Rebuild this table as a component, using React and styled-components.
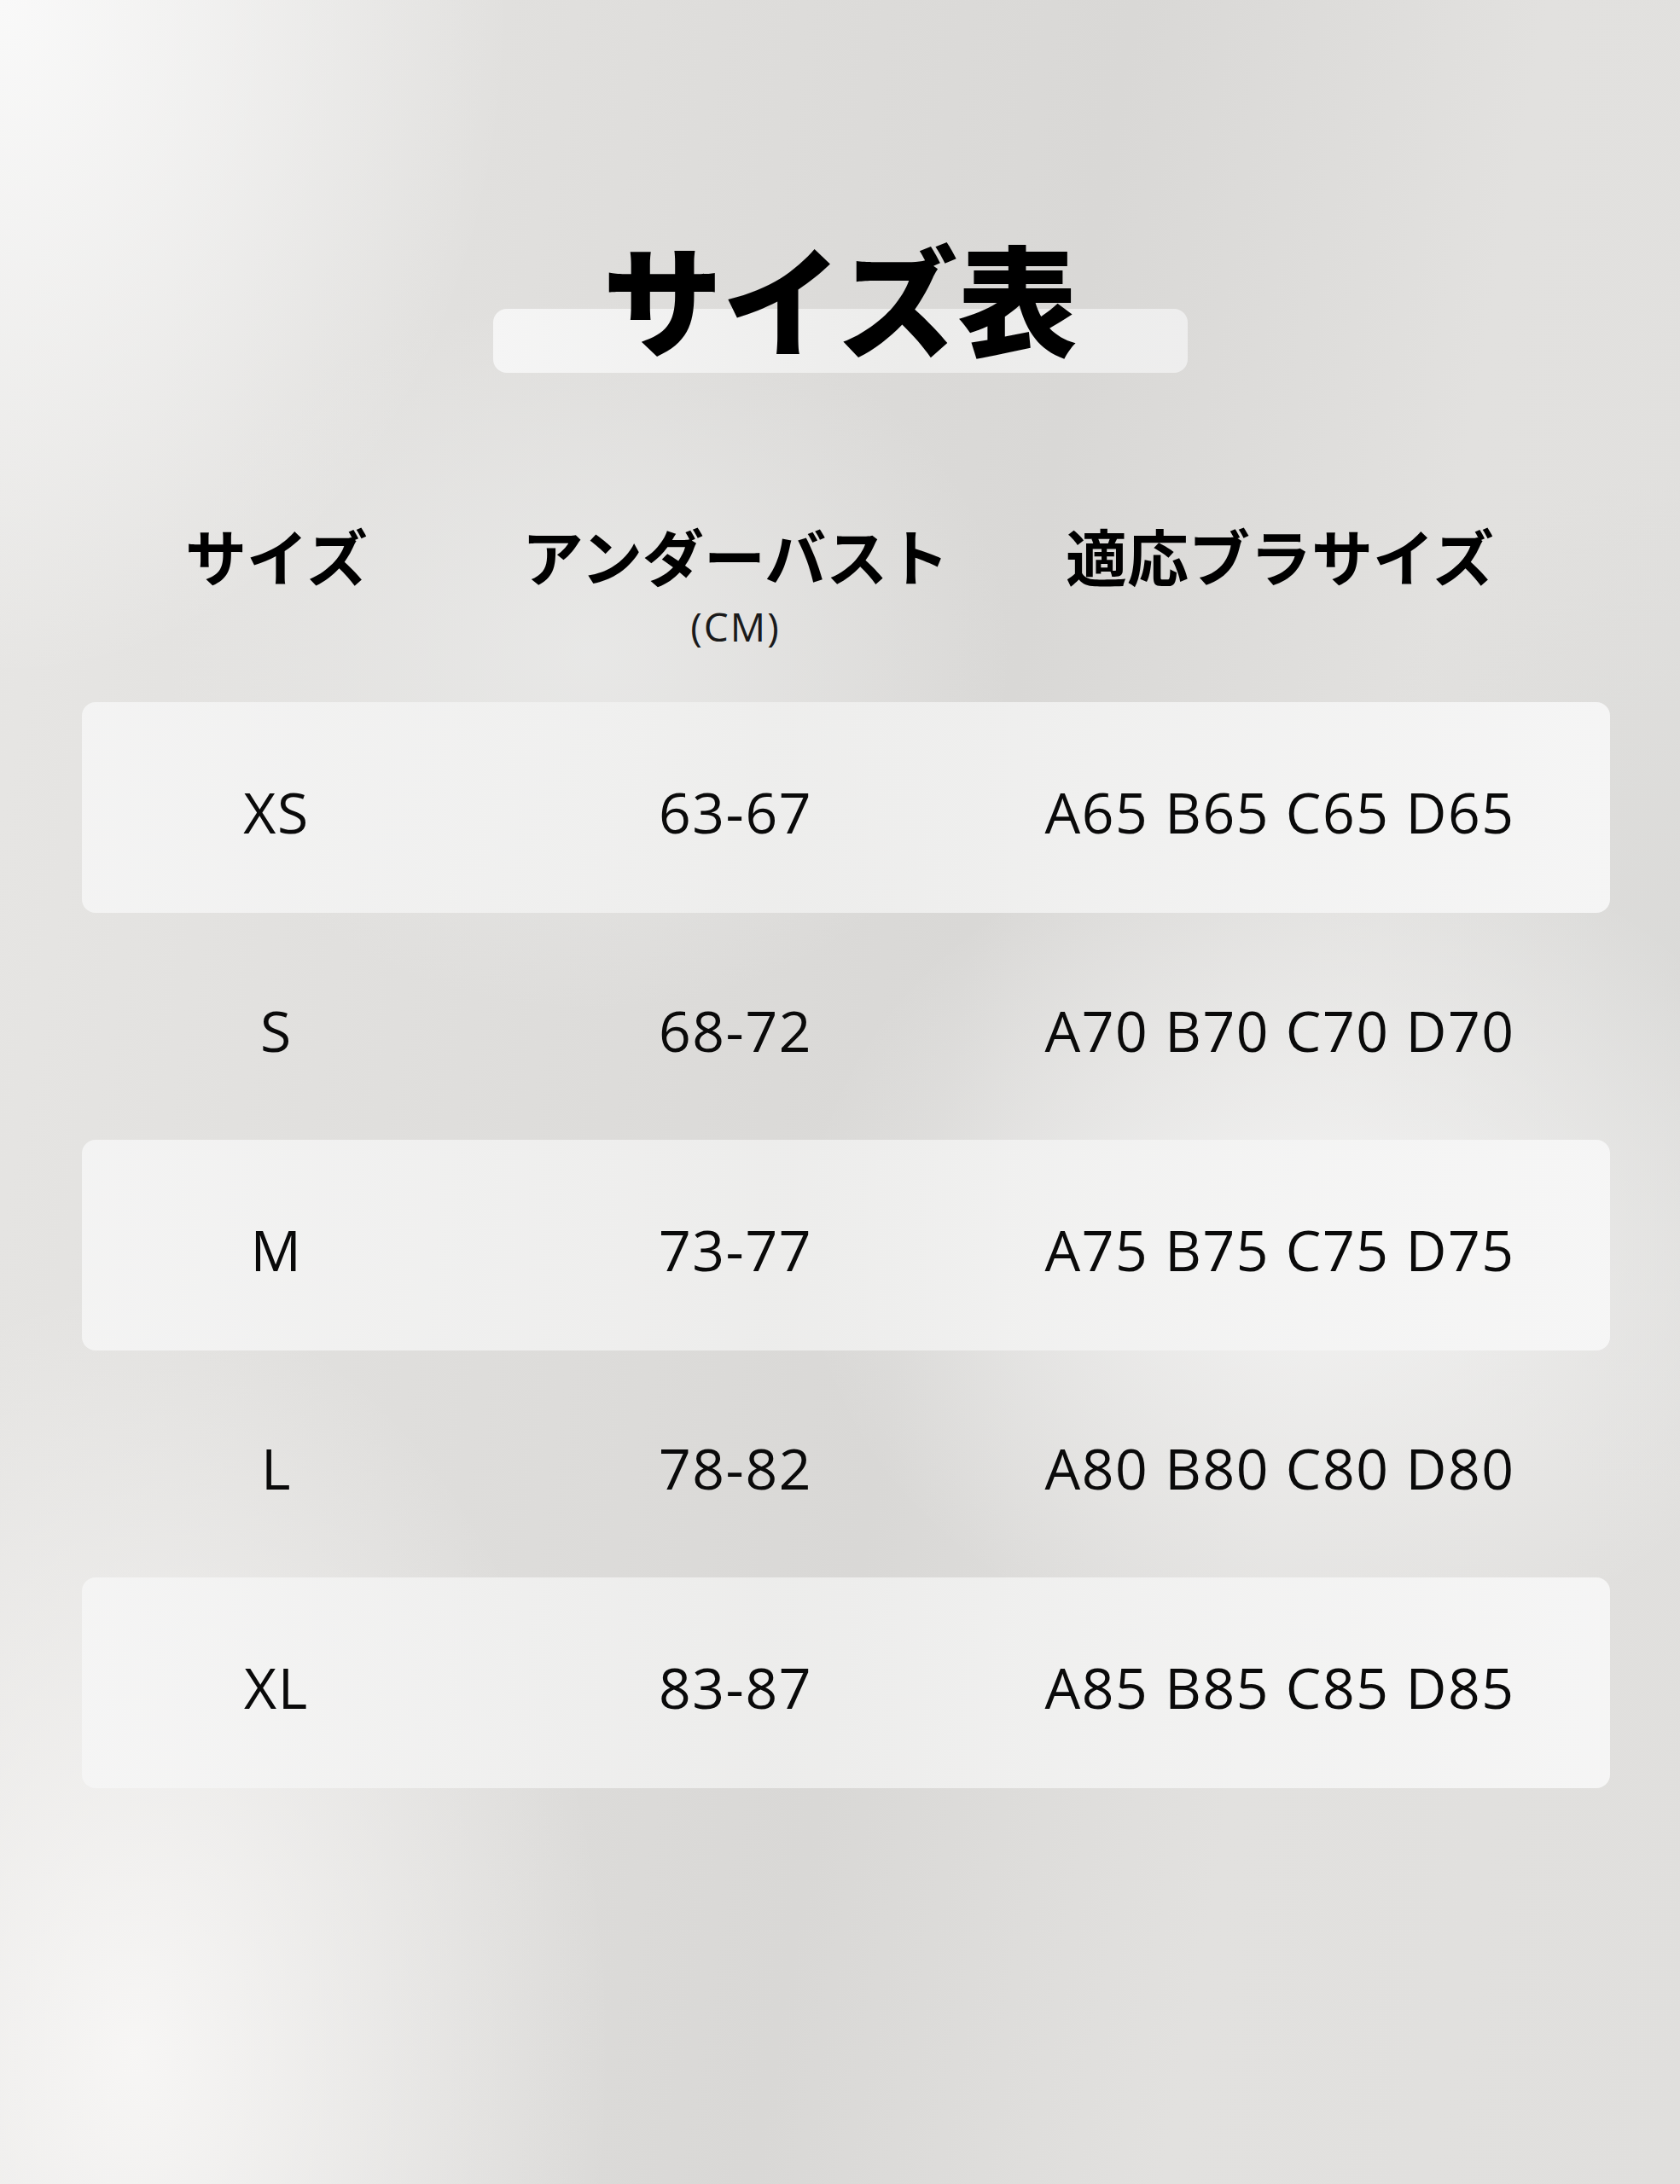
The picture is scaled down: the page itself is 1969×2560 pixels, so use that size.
import React from "react";
import styled, { createGlobalStyle } from "styled-components";

const GlobalStyle = createGlobalStyle`
  html, body {
    margin: 0;
    padding: 0;
  }
  body {
    width: 1969px;
    height: 2560px;
    overflow: hidden;
  }
`;

const Page = styled.div`
  width: 1969px;
  height: 2560px;
  box-sizing: border-box;
  padding-top: 276px;
  color: #0a0a0a;
  background:
    radial-gradient(ellipse 600px 800px at 0% 0%, rgba(250, 250, 250, 0.95), rgba(250, 250, 250, 0) 100%),
    radial-gradient(ellipse 560px 900px at 8% 94%, rgba(248, 247, 246, 0.95), rgba(248, 247, 246, 0) 100%),
    radial-gradient(ellipse 600px 500px at 78% 57%, rgba(248, 248, 248, 0.75), rgba(248, 248, 248, 0) 100%),
    radial-gradient(ellipse 500px 420px at 35% 30%, rgba(236, 236, 235, 0.7), rgba(236, 236, 235, 0) 100%),
    radial-gradient(ellipse 420px 600px at 100% 45%, rgba(214, 214, 212, 0.6), rgba(214, 214, 212, 0) 100%),
    linear-gradient(100deg, #e8e7e5 0%, #dedddb 35%, #d9d8d6 55%, #e2e1df 75%, #e0dfdd 100%);
`;

const TitleWrap = styled.div`
  display: grid;
  width: 814px;
  height: 161px;
  margin: 0 auto;
  & > * {
    grid-area: 1 / 1;
  }
`;

const TitleBar = styled.div`
  align-self: end;
  height: 75px;
  border-radius: 16px;
  background: linear-gradient(90deg, rgba(246, 246, 246, 0.95), rgba(238, 238, 237, 0.9) 60%, rgba(240, 240, 240, 0.9));
`;

const Title = styled.h1`
  align-self: start;
  margin: 0;
  text-align: center;
  font-family: "Noto Sans CJK JP", "Noto Sans", sans-serif;
  font-weight: 900;
  font-size: 140px;
  line-height: 1;
  color: #000;
  position: relative;
`;

const Table = styled.div`
  width: 1791px;
  margin-left: 96px;
  display: flex;
  flex-direction: column;
`;

const Grid = styled.div`
  display: grid;
  grid-template-columns: 456px 620px 656px;
  align-items: center;
  justify-items: center;
`;

const HeadRow = styled(Grid)`
  margin-top: 177px;
  align-items: start;
`;

const HeadCell = styled.div`
  display: flex;
  flex-direction: column;
  align-items: center;
`;

const HeadLabel = styled.div`
  font-family: "Noto Sans CJK JP", "Noto Sans", sans-serif;
  font-weight: 700;
  font-size: 72px;
  line-height: 1;
  color: #000;
  white-space: nowrap;
`;

const Unit = styled.div`
  margin-top: 25px;
  font-family: "Open Sans", "Noto Sans", sans-serif;
  font-weight: 400;
  font-size: 46px;
  line-height: 1;
  letter-spacing: 2px;
  color: #1a1a1a;
`;

const Rows = styled.div`
  margin-top: 66px;
  display: flex;
  flex-direction: column;
  gap: 9.5px;
`;

const Row = styled(Grid)`
  height: 247px;
  padding-top: 8px;
  box-sizing: border-box;
  border-radius: 16px;
  background: ${(p) =>
    p.$shaded
      ? "linear-gradient(90deg, rgba(246, 246, 246, 0.85), rgba(240, 240, 239, 0.85) 45%, rgba(247, 247, 247, 0.92))"
      : "transparent"};
`;

const Cell = styled.div`
  font-family: "Open Sans", "Noto Sans", sans-serif;
  font-weight: 400;
  font-size: 66px;
  line-height: 1;
  letter-spacing: 1.6px;
  color: #0a0a0a;
  white-space: nowrap;
`;

const sizes = [
  { size: "XS", under: "63-67", bra: "A65 B65 C65 D65" },
  { size: "S", under: "68-72", bra: "A70 B70 C70 D70" },
  { size: "M", under: "73-77", bra: "A75 B75 C75 D75" },
  { size: "L", under: "78-82", bra: "A80 B80 C80 D80" },
  { size: "XL", under: "83-87", bra: "A85 B85 C85 D85" },
];

export default function App() {
  return (
    <>
      <GlobalStyle />
      <Page>
        <TitleWrap>
          <TitleBar />
          <Title>サイズ表</Title>
        </TitleWrap>
        <Table>
          <HeadRow>
            <HeadCell>
              <HeadLabel>サイズ</HeadLabel>
            </HeadCell>
            <HeadCell>
              <HeadLabel>アンダーバスト</HeadLabel>
              <Unit>(CM)</Unit>
            </HeadCell>
            <HeadCell>
              <HeadLabel>適応ブラサイズ</HeadLabel>
            </HeadCell>
          </HeadRow>
          <Rows>
            {sizes.map((r, i) => (
              <Row key={r.size} $shaded={i % 2 === 0}>
                <Cell>{r.size}</Cell>
                <Cell>{r.under}</Cell>
                <Cell>{r.bra}</Cell>
              </Row>
            ))}
          </Rows>
        </Table>
      </Page>
    </>
  );
}
